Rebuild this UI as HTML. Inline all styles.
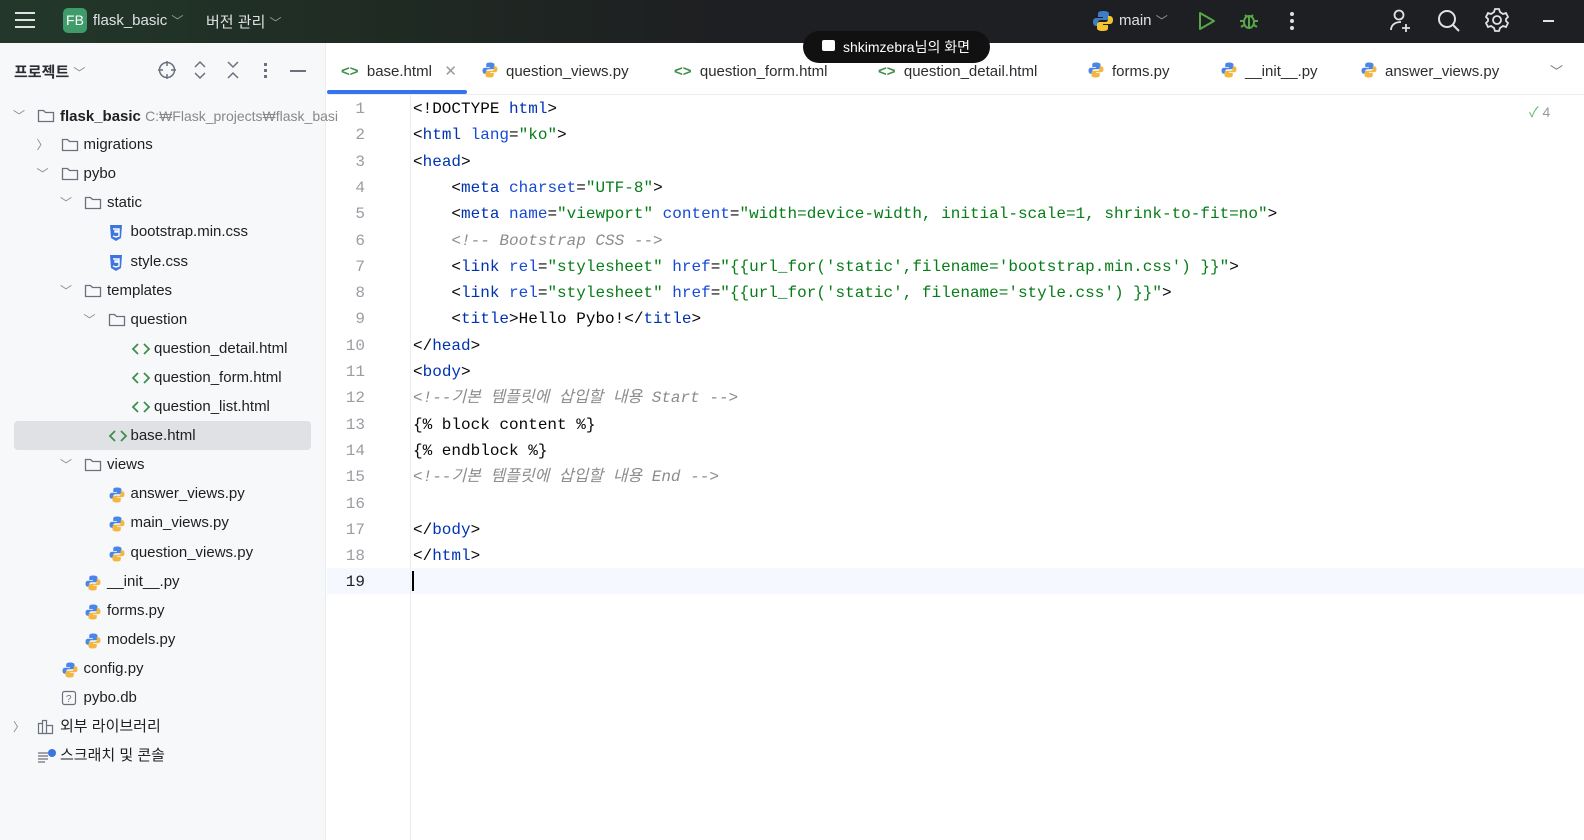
<!DOCTYPE html>
<html><head><meta charset="utf-8"><style>
*{margin:0;padding:0;box-sizing:border-box}
body{width:1584px;height:840px;overflow:hidden;background:#fff;font-family:"Liberation Sans","Noto Sans CJK KR",sans-serif;position:relative;color:#1e1f22}
.top{position:absolute;left:0;top:0;width:1584px;height:43px;background:linear-gradient(90deg,#23382a 0%,#1f2a23 25%,#1e1f22 45%,#1e1f22 100%);color:#dfe1e5;font-size:15px}
.abs{position:absolute}
.side{position:absolute;left:0;top:43px;width:326px;height:797px;background:#f7f8fa;border-right:1px solid #ebecf0}
.row{position:absolute;height:28px;line-height:28px;font-size:15px;white-space:nowrap}
.tabs{position:absolute;left:327px;top:43px;width:1257px;height:52px;border-bottom:1px solid #ebecf0;font-size:15px;color:#2b2d30}
.tab{position:absolute;top:0;height:52px;line-height:58px;white-space:nowrap}
.gut{position:absolute;left:327px;top:95px;width:84px;height:745px;border-right:1px solid #ebecf0}
.code{position:absolute;left:0;top:95px;width:1584px;font-family:"Liberation Mono","Noto Sans CJK KR",monospace;font-size:16px}
.ln{position:absolute;height:26.3px;line-height:26.3px;white-space:pre}
.num{left:327px;width:38px;text-align:right;color:#9a9da3}
.tx{left:413px;color:#080808}
.t{color:#0033b3}.a{color:#174ad4}.v{color:#067d17}.c{color:#8c8c8c;font-style:italic}
</style></head><body>
<div class="top">
 <div class="abs" style="left:15px;top:12px;width:20px;height:2px;background:#dfe1e5;box-shadow:0 7px 0 #dfe1e5,0 14px 0 #dfe1e5"></div>
 <div class="abs" style="left:63px;top:8px;width:24px;height:25px;border-radius:5px;background:#3f9b6a;color:#fff;font-size:14px;line-height:25px;text-align:center">FB</div>
 <div class="abs" style="left:93px;top:12px">flask_basic <span style="color:#9a9da3;font-size:12px">﹀</span></div>
 <div class="abs" style="left:206px;top:11px">버전 관리 <span style="color:#9a9da3;font-size:12px">﹀</span></div>
 <svg class="abs" style="left:1091px;top:9px" width="24" height="24" viewBox="0 0 24 24"><path d="M12 2c-5 0-5 2-5 3v3h5v1H5c-2 0-3 2-3 4s1 4 3 4h2v-3c0-2 1-3 3-3h5c2 0 3-1 3-3V5c0-2-2-3-6-3z" fill="#3e7cc6"/><path d="M12 22c5 0 5-2 5-3v-3h-5v-1h7c2 0 3-2 3-4s-1-4-3-4h-2v3c0 2-1 3-3 3H9c-2 0-3 1-3 3v3c0 2 2 3 6 3z" fill="#f2c530"/></svg>
 <div class="abs" style="left:1119px;top:12px">main <span style="color:#9a9da3;font-size:12px">﹀</span></div>
 <svg class="abs" style="left:1196px;top:10px" width="22" height="22"><path d="M4 3 L18 11 L4 19Z" fill="none" stroke="#57a64a" stroke-width="2" stroke-linejoin="round"/></svg>
 <svg class="abs" style="left:1238px;top:9px" width="22" height="22" fill="none" stroke="#57a64a" stroke-width="2"><ellipse cx="11" cy="13" rx="5" ry="6"/><path d="M7 6l2 2M15 6l-2 2M2 12h4M16 12h4M3 18l3-2M19 18l-3-2M11 8v11"/></svg>
 <div class="abs" style="left:1290px;top:12px;width:4px;height:4px;border-radius:2px;background:#dfe1e5;box-shadow:0 7px 0 #dfe1e5,0 14px 0 #dfe1e5"></div>
 <svg class="abs" style="left:1388px;top:8px" width="26" height="26" fill="none" stroke="#dfe1e5" stroke-width="1.8"><circle cx="11" cy="7" r="4.5"/><path d="M3 22c0-5 4-8 10-8M18 16v8M14 20h8"/></svg>
 <svg class="abs" style="left:1436px;top:8px" width="26" height="26" fill="none" stroke="#dfe1e5" stroke-width="2"><circle cx="11" cy="11" r="8"/><path d="M17 17l6 6"/></svg>
 <svg class="abs" style="left:1484px;top:7px" width="26" height="26" fill="none" stroke="#dfe1e5" stroke-width="1.8"><circle cx="13" cy="13" r="4"/><path d="M11 2h4l1 3 3 2 3-1 2 4-2 2v2l2 2-2 4-3-1-3 2-1 3h-4l-1-3-3-2-3 1-2-4 2-2v-2l-2-2 2-4 3 1 3-2z"/></svg>
 <div class="abs" style="left:1543px;top:20px;width:11px;height:1.5px;background:#dfe1e5"></div>
</div>
<div class="side">
 <div class="abs" style="left:14px;top:18px;font-size:15px;font-weight:bold;color:#2b2d30">프로젝트 <span style="font-weight:normal;color:#888;font-size:12px">﹀</span></div>
 <svg class="abs" style="left:157px;top:17px" width="20" height="20" fill="none" stroke="#6c707e" stroke-width="1.5"><circle cx="10" cy="10" r="7.5"/><path d="M10 1v5M10 14v5M1 10h5M14 10h5"/></svg>
 <svg class="abs" style="left:192px;top:17px" width="16" height="20" fill="none" stroke="#6c707e" stroke-width="1.5"><path d="M3 7l5-5 5 5M3 13l5 5 5-5"/></svg>
 <svg class="abs" style="left:225px;top:17px" width="16" height="20" fill="none" stroke="#6c707e" stroke-width="1.5"><path d="M3 2l5 5 5-5M3 18l5-5 5 5"/></svg>
 <div class="abs" style="left:264px;top:20px;width:3px;height:3px;background:#6c707e;box-shadow:0 6px 0 #6c707e,0 12px 0 #6c707e"></div>
 <div class="abs" style="left:290px;top:27px;width:16px;height:1.5px;background:#6c707e"></div>
 <div class="abs" style="left:14px;top:378px;width:297px;height:29px;background:#dfe1e5;border-radius:4px"></div>
</div>
<div id="tree"></div>
<div class="tabs">
 <div class="tab" style="left:14px"><span style="color:#3d8f4a;font-weight:bold">&lt;&gt;</span>&nbsp; base.html &nbsp; <span style="color:#999">✕</span></div>
 <div class="abs" style="left:0;top:47px;width:140px;height:4px;background:#3574f0;border-radius:2px"></div>
 <div class="tab" style="left:154px"><span class="py"></span>question_views.py</div>
 <div class="tab" style="left:347px"><span style="color:#3d8f4a;font-weight:bold">&lt;&gt;</span>&nbsp; question_form.html</div>
 <div class="tab" style="left:551px"><span style="color:#3d8f4a;font-weight:bold">&lt;&gt;</span>&nbsp; question_detail.html</div>
 <div class="tab" style="left:760px"><span class="py"></span>forms.py</div>
 <div class="tab" style="left:893px"><span class="py"></span>__init__.py</div>
 <div class="tab" style="left:1033px"><span class="py"></span>answer_views.py</div>
 <div class="tab" style="left:1223px;color:#777;font-size:13px">﹀</div>
</div>
<div class="abs" style="left:803px;top:31px;width:187px;height:32px;background:#111;border-radius:16px;color:#fff;font-size:14px;line-height:32px;padding-left:40px">shkimzebra님의 화면</div>
<div class="abs" style="left:822px;top:40px;width:13px;height:11px;background:#fff;border-radius:2px"></div>
<div class="abs" style="left:327px;top:568px;width:1257px;height:26px;background:#f5f8fe"></div>
<div class="gut"></div>
<div class="abs" style="left:1529px;top:102px;color:#5fb865;font-size:14px">✓<span style="color:#999"> 4</span></div>
<div class="abs" style="left:412px;top:571px;width:2px;height:20px;background:#000"></div>
<div class="code" id="code"></div>
<script>
var pyS='<svg width="18" height="18" viewBox="0 0 24 24" style="vertical-align:-3px;margin-right:7px"><path d="M12 2c-5 0-5 2-5 3v3h5v1H5c-2 0-3 2-3 4s1 4 3 4h2v-3c0-2 1-3 3-3h5c2 0 3-1 3-3V5c0-2-2-3-6-3z" fill="#4a86e8"/><path d="M12 22c5 0 5-2 5-3v-3h-5v-1h7c2 0 3-2 3-4s-1-4-3-4h-2v3c0 2-1 3-3 3H9c-2 0-3 1-3 3v3c0 2 2 3 6 3z" fill="#f4b63f"/></svg>';
document.querySelectorAll('.py').forEach(e=>e.outerHTML=pyS);
var ico={
f:'<svg width="18" height="16" viewBox="0 0 18 16" fill="none" stroke="#6c707e" stroke-width="1.3"><path d="M1.5 2.5h5l2 2h8v9h-15z"/></svg>',
css:'<svg width="16" height="18" viewBox="0 0 16 18"><path d="M2 1h12l-1 13-5 3-5-3z" fill="#3d74e0"/><path d="M5 5h6v2H7v1h4v4l-3 1-3-1" fill="none" stroke="#fff" stroke-width="1.4"/></svg>',
h:'<svg width="20" height="16" viewBox="0 0 20 16" fill="none" stroke="#3d8f4a" stroke-width="1.8"><path d="M7 3L2 8l5 5M13 3l5 5-5 5"/></svg>',
py:'<svg width="18" height="18" viewBox="0 0 24 24"><path d="M12 2c-5 0-5 2-5 3v3h5v1H5c-2 0-3 2-3 4s1 4 3 4h2v-3c0-2 1-3 3-3h5c2 0 3-1 3-3V5c0-2-2-3-6-3z" fill="#4a86e8"/><path d="M12 22c5 0 5-2 5-3v-3h-5v-1h7c2 0 3-2 3-4s-1-4-3-4h-2v3c0 2-1 3-3 3H9c-2 0-3 1-3 3v3c0 2 2 3 6 3z" fill="#f4b63f"/></svg>',
db:'<svg width="16" height="16" viewBox="0 0 16 16" fill="none" stroke="#6c707e" stroke-width="1.2"><rect x="1.5" y="1.5" width="13" height="13" rx="2"/><text x="5" y="12" font-size="10" fill="#6c707e" stroke="none" font-family="Liberation Sans">?</text></svg>',
lib:'<svg width="18" height="16" viewBox="0 0 18 16" fill="none" stroke="#6c707e" stroke-width="1.2"><path d="M1.5 4.5h4v10h-4zM5.5 1.5h4v13h-4zM9.5 6.5h6v8h-6z"/></svg>',
sc:'<svg width="20" height="16" viewBox="0 0 20 16"><path d="M1 5h10M1 8h10M1 11h10M1 14h7" stroke="#6c707e" stroke-width="1.2"/><circle cx="15" cy="5" r="4" fill="#3d74e0"/></svg>'};
var rows=[[0,1,'f','<b>flask_basic</b> <span style="color:#888;font-size:14px">C:₩Flask_projects₩flask_basi</span>'],[1,2,'f','migrations'],[1,1,'f','pybo'],[2,1,'f','static'],[3,0,'css','bootstrap.min.css'],[3,0,'css','style.css'],[2,1,'f','templates'],[3,1,'f','question'],[4,0,'h','question_detail.html'],[4,0,'h','question_form.html'],[4,0,'h','question_list.html'],[3,0,'h','base.html'],[2,1,'f','views'],[3,0,'py','answer_views.py'],[3,0,'py','main_views.py'],[3,0,'py','question_views.py'],[2,0,'py','__init__.py'],[2,0,'py','forms.py'],[2,0,'py','models.py'],[1,0,'py','config.py'],[1,0,'db','pybo.db'],[0,2,'lib','외부 라이브러리'],[0,0,'sc','스크래치 및 콘솔']];
var h='';rows.forEach((r,i)=>{var y=102+i*29.1,x=37+r[0]*23.5;
if(r[1]) h+='<div class="row" style="left:'+(x-24)+'px;top:'+y+'px;color:#888;font-size:12px">'+(r[1]==1?'﹀':'〉')+'</div>';
h+='<div class="row" style="left:'+x+'px;top:'+y+'px">'+ico[r[2]].replace('<svg','<svg style="position:absolute;top:6px;left:0"')+'<span style="position:absolute;left:23px">'+r[3]+'</span></div>';});
document.getElementById('tree').innerHTML=h;
var L=['<span>&lt;!DOCTYPE <span class="t">html</span>&gt;</span>',
'&lt;<span class="t">html</span> <span class="a">lang</span>=<span class="v">"ko"</span>&gt;',
'&lt;<span class="t">head</span>&gt;',
'    &lt;<span class="t">meta</span> <span class="a">charset</span>=<span class="v">"UTF-8"</span>&gt;',
'    &lt;<span class="t">meta</span> <span class="a">name</span>=<span class="v">"viewport"</span> <span class="a">content</span>=<span class="v">"width=device-width, initial-scale=1, shrink-to-fit=no"</span>&gt;',
'    <span class="c">&lt;!-- Bootstrap CSS --&gt;</span>',
'    &lt;<span class="t">link</span> <span class="a">rel</span>=<span class="v">"stylesheet"</span> <span class="a">href</span>=<span class="v">"{{url_for(\'static\',filename=\'bootstrap.min.css\') }}"</span>&gt;',
'    &lt;<span class="t">link</span> <span class="a">rel</span>=<span class="v">"stylesheet"</span> <span class="a">href</span>=<span class="v">"{{url_for(\'static\', filename=\'style.css\') }}"</span>&gt;',
'    &lt;<span class="t">title</span>&gt;Hello Pybo!&lt;/<span class="t">title</span>&gt;',
'&lt;/<span class="t">head</span>&gt;','&lt;<span class="t">body</span>&gt;',
'<span class="c">&lt;!--기본 템플릿에 삽입할 내용 Start --&gt;</span>',
'{% block content %}','{% endblock %}',
'<span class="c">&lt;!--기본 템플릿에 삽입할 내용 End --&gt;</span>','',
'&lt;/<span class="t">body</span>&gt;','&lt;/<span class="t">html</span>&gt;',''];
var c='';L.forEach((s,i)=>{var y=1+i*26.3;c+='<div class="ln num" style="top:'+y+'px;'+(i==18?'color:#1e1f22':'')+'">'+(i+1)+'</div><div class="ln tx" style="top:'+y+'px">'+s+'</div>';});
document.getElementById('code').innerHTML=c;
</script>
</body></html>
